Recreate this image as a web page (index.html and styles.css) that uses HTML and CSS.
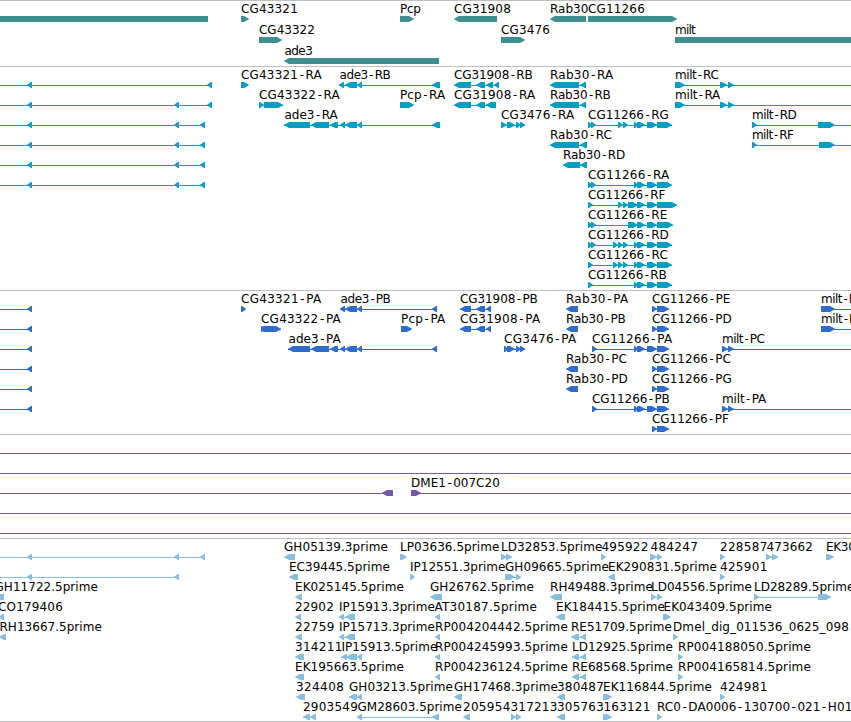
FILE: index.html
```html
<!doctype html>
<html lang="en">
    <head>
        <meta charset="UTF-8" />
        <meta name="viewport" content="width=device-width, initial-scale=1.0" />
        <title>Genome Browser</title>
        <link rel="stylesheet" href="styles.css">
    </head>
    <body>
        <main class="browser">
            <section class="track genes"><svg id="genes"></svg></section>
            <section class="track transcripts"><svg id="transcripts"></svg></section>
            <section class="track proteins"><svg id="proteins"></svg></section>
            <section class="track clones"><svg id="clones"></svg></section>
            <section class="track ests"><svg id="ests"></svg></section>
        </main>
        <script src="script.js"></script>
    </body>
</html>
```
FILE: styles.css
```css
body {
    margin: 0;
    background: #fff;
    overflow: hidden;
}
.browser {
    display: flex;
    flex-direction: column;
    border-bottom: 1px solid #bfbfbf;
}
.track {
    border-top: 1px solid #bfbfbf;
}
.track svg {
    display: block;
    width: 100%;
    height: 100%;
    overflow: hidden;
}
.track text {
    font-family: "DejaVu Sans", sans-serif;
    font-size: 12px;
    fill: #000;
}
/* wider hyphen between gene and isoform */
.track .dash {
    font-family: "DejaVu Sans Mono", monospace;
}
.track polygon,
.track rect {
    fill: currentColor;
}
.genes {
    height: 65px;
    color: #3f8e94;
}
.transcripts {
    height: 223px;
    color: #009ec1;
}
.proteins {
    height: 143px;
    color: #306ccc;
}
.clones {
    height: 103px;
    color: #7757a8;
}
.ests {
    height: 182px;
    color: #89bddd;
}
```
FILE: script.js
```js
const SVG_NS = "http://www.w3.org/2000/svg";
const TOP = 15; // first row of glyphs, below its label
const EDGE = 860; // past the right edge, features run off screen

// exons shared by several isoforms
const ade3 = [[340, 345], [345, 357], [357, 362]];
const tail = [[634, 638], [637, 645], [647, 657]];

// [row, strand, exons, label, label start, label end, line start, line end]
const genes = [
    [0, "", [[-5, 208]]],
    [0, "+", [[241, 249]], "CG43321", 241.5, 297.5],
    [1, "+", [[259, 282]], "CG43322", 259.5, 314.5],
    [2, "-", [[284, 439]], "ade3", 285, 312.5],
    [0, "+", [[400, 414]], "Pcp", 400.5, 420.5],
    [0, "-", [[454, 497]], "CG31908", 454.5, 510.5],
    [1, "+", [[501, 525]], "CG3476", 501.5, 549.5],
    [0, "-", [[550, 586]], "Rab30", 550.5, 588],
    [0, "+", [[588, 677]], "CG11266", 588.5, 644.5],
    [1, "+", [[675, EDGE]], "milt", 675.5, 695.5],
];

const transcripts = [
    [0, "-", [[27, 32], [207, 212]], "", 0, 0, -5],
    [1, "-", [[27, 32], [174, 179], [207, 212]], "", 0, 0, -5],
    [2, "-", [[27, 32], [174, 179], [200, 205]], "", 0, 0, -5],
    [3, "-", [[27, 32], [174, 179], [200, 205]], "", 0, 0, -5],
    [4, "-", [[27, 32], [174, 179], [200, 205]], "", 0, 0, -5],
    [5, "-", [[27, 32], [174, 179], [200, 205]], "", 0, 0, -5],
    [0, "+", [[241, 249]], "CG43321-RA", 241.5, 321.5],
    [1, "+", [[259, 264], [264, 283]], "CG43322-RA", 259.5, 339.5],
    [2, "-", [[284, 310], [311, 329], [330, 338], ...ade3, [432, 440]], "ade3-RA", 285, 337.5],
    [0, "-", [[339, 344], [345, 357], [357, 362], [432, 440]], "ade3-RB", 340, 390.5],
    [1, "+", [[400, 414]], "Pcp-RA", 400.5, 445],
    [0, "-", [[454, 471], [476, 485], [486, 493], [494, 499]], "CG31908-RB", 454.5, 532.5],
    [1, "-", [[454, 471], [476, 485], [486, 496]], "CG31908-RA", 454.5, 535],
    [2, "+", [[501, 507], [507, 515], [516, 521], [520, 525]], "CG3476-RA", 501.5, 574],
    [0, "-", [[550, 579], [580, 586]], "Rab30-RA", 550.5, 613],
    [1, "-", [[550, 579], [580, 586]], "Rab30-RB", 550.5, 610.5],
    [3, "-", [[550, 579], [580, 587]], "Rab30-RC", 550.5, 611.5],
    [4, "-", [[563, 580], [580, 587]], "Rab30-RD", 563.5, 625],
    [2, "+", [[588, 592], [591, 596], [618, 623], [623, 628], ...tail, [657, 672]], "CG11266-RG", 588.5, 668.5],
    [5, "+", [[588, 592], [591, 596], ...tail, [657, 672]], "CG11266-RA", 588.5, 669],
    [6, "+", [[588, 593], [618, 623], [623, 628], [628, 638], [637, 645], [647, 657], [657, 677]], "CG11266-RF", 588.5, 665],
    [7, "+", [[588, 592], [591, 596], [628, 638], [637, 645], [647, 657], [657, 673]], "CG11266-RE", 588.5, 667],
    [8, "+", [[588, 592], [591, 596], [613, 618], [618, 623], [623, 628], ...tail, [657, 672]], "CG11266-RD", 588.5, 668.5],
    [9, "+", [[588, 593], [613, 618], [618, 623], [623, 628], ...tail, [657, 672]], "CG11266-RC", 588.5, 667.5],
    [10, "+", [[588, 593], ...tail, [657, 672]], "CG11266-RB", 588.5, 666.5],
    [0, "+", [[675, 685], [720, 727], [728, 734]], "milt-RC", 675.5, 718.5, 675, EDGE],
    [1, "+", [[675, 685], [720, 727], [728, 734]], "milt-RA", 675.5, 720, 675, EDGE],
    [2, "+", [[752, 757], [818, 835]], "milt-RD", 752.5, 796.5, 752, EDGE],
    [3, "+", [[752, 757], [819, 835]], "milt-RF", 752.5, 793.5, 752, EDGE],
];

const proteins = [
    [0, "-", [[27, 32]], "", 0, 0, -5],
    [1, "-", [[27, 32]], "", 0, 0, -5],
    [2, "-", [[27, 32]], "", 0, 0, -5],
    [3, "-", [[27, 32]], "", 0, 0, -5],
    [4, "-", [[27, 32]], "", 0, 0, -5],
    [5, "-", [[27, 32]], "", 0, 0, -5],
    [0, "+", [[241, 246]], "CG43321-PA", 241.5, 321],
    [1, "+", [[261, 264], [263, 281]], "CG43322-PA", 261.5, 340.5],
    [2, "-", [[288, 310], [311, 329], [330, 338], ...ade3, [432, 437]], "ade3-PA", 289, 340.5],
    [0, "-", [...ade3, [432, 437]], "ade3-PB", 341, 390.5],
    [1, "+", [[401, 412]], "Pcp-PA", 401.5, 445],
    [0, "-", [[460, 471], [476, 485], [486, 491]], "CG31908-PB", 460.5, 537.5],
    [1, "-", [[460, 471], [476, 485], [486, 491]], "CG31908-PA", 460.5, 540],
    [2, "+", [[504, 508], [507, 515], [516, 521], [520, 525]], "CG3476-PA", 504.5, 576],
    [0, "-", [[566, 578]], "Rab30-PA", 566.5, 628],
    [1, "-", [[566, 578]], "Rab30-PB", 566.5, 625.5],
    [3, "-", [[566, 578]], "Rab30-PC", 566.5, 626.5],
    [4, "-", [[566, 578]], "Rab30-PD", 566.5, 627.5],
    [2, "+", [[592, 597], ...tail, [657, 669]], "CG11266-PA", 592.5, 672],
    [5, "+", [[592, 597], ...tail, [657, 669]], "CG11266-PB", 592.5, 669.5],
    [0, "+", [[652, 657], [657, 669]], "CG11266-PE", 652.5, 730],
    [1, "+", [[652, 657], [657, 669]], "CG11266-PD", 652.5, 731.5],
    [3, "+", [[652, 657], [657, 669]], "CG11266-PC", 652.5, 730.5],
    [4, "+", [[652, 657], [657, 669]], "CG11266-PG", 652.5, 731.5],
    [6, "+", [[652, 657], [657, 669]], "CG11266-PF", 652.5, 728.5],
    [2, "+", [[722, 728], [728, 734]], "milt-PC", 722.5, 764.5, 722, EDGE],
    [5, "+", [[722, 728], [728, 734]], "milt-PA", 722.5, 766, 722, EDGE],
    [0, "+", [[821, 835]], "milt-PD", 821.5, 864.5, 821, EDGE],
    [1, "+", [[821, 835]], "milt-PF", 821.5, 862.5, 821, EDGE],
];

const clones = [
    [0, "", [], "", 0, 0, -5, EDGE],
    [1, "", [], "", 0, 0, -5, EDGE],
    [2, "-", [[382, 393]], "", 0, 0, -5],
    [2, "+", [[411, 421]], "DME1-007C20", 411.5, 499.5, 411, EDGE],
    [3, "", [], "", 0, 0, -5, EDGE],
    [4, "", [], "", 0, 0, -5, EDGE],
];

const ests = [
    [0, "-", [[27, 32], [174, 179], [200, 205]], "", 0, 0, -5],
    [0, "-", [[284, 295]], "GH05139.3prime", 284.5, 387.5],
    [0, "+", [[400, 407]], "LP03636.5prime", 400.5, 499],
    [0, "+", [[501, 507], [506, 512]], "LD32853.5prime", 501.5, 602],
    [0, "+", [[601, 606]], "495922", 602, 648],
    [0, "+", [[650, 657], [657, 662]], "484247", 651, 697.5],
    [0, "+", [[720, 725]], "228587", 720.5, 767],
    [0, "+", [[766, 772], [772, 778]], "473662", 767, 812.5],
    [0, "+", [[826, 834]], "EK30", 826.5, 855.5],

    [1, "-", [[27, 32], [174, 179]], "", 0, 0, -5],
    [1, "-", [[289, 298]], "EC39445.5prime", 289.5, 389.5],
    [1, "+", [[410, 415]], "IP12551.3prime", 410.5, 505],
    [1, "+", [[505, 515], [516, 521]], "GH09665.5prime", 505.5, 608.5],
    [1, "-", [[608, 615]], "EK290831.5prime", 608.5, 716.5],
    [1, "+", [[720, 725]], "425901", 720.5, 767],

    [2, "-", [[-8, 4]], "GH11722.5prime", -5, 97.5],
    [2, "-", [[295, 302]], "EK025145.5prime", 295.5, 403.5],
    [2, "-", [[430, 442]], "GH26762.5prime", 430.5, 533.5],
    [2, "-", [[550, 562]], "RH49488.3prime", 550.5, 652.5],
    [2, "+", [[651, 656], [657, 662]], "LD04556.5prime", 651.5, 751.5],
    [2, "+", [[754, 759], [818, 831]], "LD28289.5prime", 754.5, 854],

    [3, "-", [[-1, 4]], "CO179406", -1.5, 62.5],
    [3, "-", [[295, 301]], "22902", 295.5, 333.5],
    [3, "-", [[339, 344], [345, 355]], "IP15913.3prime", 339.5, 434.5],
    [3, "-", [[435, 440]], "AT30187.5prime", 435, 536.5],
    [3, "-", [[556, 565]], "EK184415.5prime", 556.5, 664.5],
    [3, "+", [[663, 671]], "EK043409.5prime", 664, 771.5],

    [4, "-", [[-1, 6]], "RH13667.5prime", 0, 101.5],
    [4, "-", [[295, 302]], "22759", 295.5, 334],
    [4, "-", [[339, 344], [345, 355]], "IP15713.3prime", 339.5, 434.5],
    [4, "-", [[435, 440]], "RP004204442.5prime", 435.5, 567.5],
    [4, "-", [[571, 579], [580, 586]], "RE51709.5prime", 571.5, 671.5],
    [4, "+", [[673, 678]], "Dmel_dig_011536_0625_098", 673.5, 848.5],

    [5, "-", [[295, 304]], "314211", 295.5, 342],
    [5, "-", [[341, 347], [346, 357], [357, 362]], "IP15913.5prime", 342, 437],
    [5, "-", [[435, 440]], "RP004245993.5prime", 435.5, 567.5],
    [5, "-", [[572, 579], [580, 586]], "LD12925.5prime", 572.5, 672.5],
    [5, "+", [[678, 683]], "RP004188050.5prime", 678.5, 810.5],

    [6, "-", [[295, 304]], "EK195663.5prime", 295.5, 403.5],
    [6, "-", [[435, 440]], "RP004236124.5prime", 435.5, 567.5],
    [6, "-", [[572, 579], [580, 586]], "RE68568.5prime", 572.5, 672.5],
    [6, "+", [[678, 683]], "RP004165814.5prime", 678.5, 810.5],

    [7, "-", [[296, 305]], "324408", 296.5, 343.5],
    [7, "-", [[349, 357], [357, 362]], "GH03213.5prime", 349.5, 452.5],
    [7, "-", [[454, 462]], "GH17468.3prime", 454.5, 557.5],
    [7, "-", [[557, 565]], "380487", 557.5, 603.5],
    [7, "+", [[603, 612]], "EK116844.5prime", 603.5, 711.5],
    [7, "+", [[720, 725]], "424981", 720.5, 767],

    [8, "-", [[303, 310], [310, 316]], "2903549", 303.5, 357.5],
    [8, "-", [[357, 362], [432, 439]], "GM28603.5prime", 358, 461.5],
    [8, "-", [[463, 470]], "205954", 463.5, 510],
    [8, "+", [[511, 516], [516, 521]], "317213", 511, 557],
    [8, "-", [[557, 565]], "305763", 557.5, 603.5],
    [8, "+", [[603, 612]], "163121", 604, 650],
    [8, "+", [[657, 662]], "RC0-DA0006-130700-021-H01", 657.5, 852],
];

const add = (parent, tag, attrs) => {
    const el = document.createElementNS(SVG_NS, tag);
    for (const key in attrs) el.setAttribute(key, attrs[key]);
    parent.appendChild(el);
    return el;
};

const drawExon = (svg, strand, x1, x2, y) => {
    if (!strand) {
        add(svg, "rect", { x: x1, y: y, width: x2 - x1, height: 6 });
        return;
    }
    const head = Math.min(x2 - x1 - 1, 5);
    const tip = strand === "+" ? x2 : x1;
    const back = strand === "+" ? x1 : x2;
    const neck = strand === "+" ? x2 - head : x1 + head;
    add(svg, "polygon", {
        points: `${back},${y} ${neck},${y} ${tip},${y + 2.7} ${tip},${y + 3.3} ${neck},${y + 6} ${back},${y + 6}`,
    });
};

const drawLabel = (svg, label, start, end, y) => {
    const text = add(svg, "text", {
        x: start - 0.5,
        y: y,
        textLength: end - start + 0.8,
    });
    label.split(/(-)/).forEach((part) => {
        const span = add(text, "tspan", part === "-" ? { class: "dash" } : {});
        span.textContent = part;
    });
};

const drawTrack = (id, features, pitch) => {
    const svg = document.getElementById(id);
    features.forEach(([row, strand, exons, label, start, end, from, to]) => {
        const y = TOP + row * pitch;
        const x1 = from ?? exons[0][0];
        const x2 = to ?? exons[exons.length - 1][1];
        // a single exon fills its whole span, so it needs no intron line
        if (exons.length !== 1 || from !== undefined) {
            add(svg, "rect", { x: x1, y: y + 3, width: x2 - x1, height: 1 });
        }
        exons.forEach(([a, b]) => drawExon(svg, strand, a, b, y));
        if (label) drawLabel(svg, label, start, end, y - 3);
    });
};

drawTrack("genes", genes, 21);
drawTrack("transcripts", transcripts, 20);
drawTrack("proteins", proteins, 20);
drawTrack("clones", clones, 20);
drawTrack("ests", ests, 20);
```
